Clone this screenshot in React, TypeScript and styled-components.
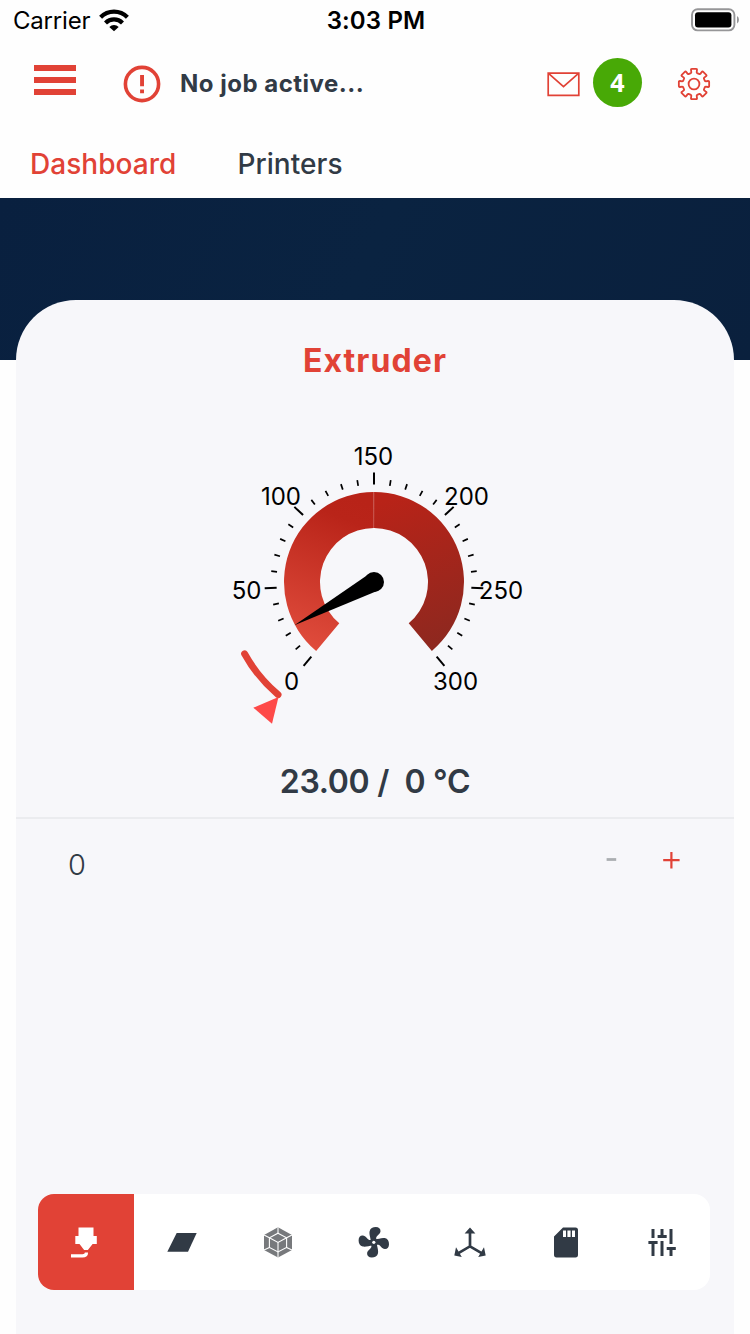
import React from 'react';
import styled, { createGlobalStyle } from 'styled-components';

const red = '#e14236';
const ink = '#313a45';

const GlobalStyle = createGlobalStyle`
  * { box-sizing: border-box; }
  body {
    margin: 0;
    background: #fefefe;
    font-family: Inter, 'Liberation Sans', sans-serif;
    color: ${ink};
  }
  svg { display: block; flex: none; }
`;

const Screen = styled.div`
  width: 750px;
  height: 1334px;
  display: flex;
  flex-direction: column;
  overflow: hidden;
`;

const StatusBar = styled.div`
  height: 40px;
  display: grid;
  grid-template-columns: 1fr auto 1fr;
  align-items: center;
  padding: 0 11px 0 13px;
  color: #000;
  font-size: 24px;
`;

const Carrier = styled.div`
  display: flex;
  align-items: center;
  gap: 9px;
  letter-spacing: -0.2px;
`;

const Clock = styled.div`
  font-weight: 600;
  letter-spacing: 0.15px;
`;

const BatterySlot = styled.div`
  justify-self: end;
`;

const Toolbar = styled.header`
  height: 88px;
  display: flex;
  align-items: center;
  padding: 0 39px 0 34px;
`;

const MenuButton = styled.div`
  width: 42px;
  height: 30px;
  margin: -8px 47px 0 0;
  display: flex;
  flex-direction: column;
  justify-content: space-between;
`;

const MenuLine = styled.div`
  height: 6px;
  background: ${red};
`;

const JobStatus = styled.div`
  flex: 1;
  margin: -1px 0 0 19px;
  font-size: 24px;
  font-weight: 700;
  letter-spacing: 0.5px;
  white-space: nowrap;
`;

const Badge = styled.div`
  width: 49px;
  height: 49px;
  margin: -4px 35px 0 13px;
  border-radius: 50%;
  background: #48a906;
  color: #fff;
  display: flex;
  align-items: center;
  justify-content: center;
  font: 700 25px 'Open Sans', 'Noto Sans', sans-serif;
`;

const Tabs = styled.nav`
  height: 70px;
  display: flex;
  align-items: center;
  gap: 61px;
  padding: 1px 0 0 30px;
`;

const Tab = styled.div<{ $active?: boolean }>`
  font-size: 28px;
  line-height: 34px;
  font-weight: 500;
  letter-spacing: 0.05px;
  color: ${(p) => (p.$active ? red : ink)};
`;

const Banner = styled.div`
  height: 162px;
  flex: none;
  background: linear-gradient(115deg, #09203f 0%, #0a2341 48%, #0a203d 100%);
`;

const Card = styled.main`
  flex: 1;
  margin: -60px 16px 0;
  border-radius: 60px 60px 0 0;
  background: #f7f7fa;
  display: flex;
  flex-direction: column;
`;

const Title = styled.h1`
  margin: 41px 0 0;
  height: 40px;
  font-size: 32px;
  line-height: 40px;
  font-weight: 700;
  text-align: center;
  letter-spacing: 1.1px;
  color: ${red};
`;

const GaugeSlot = styled.div`
  height: 340px;
  padding-top: 39px;
  display: flex;
  justify-content: center;
`;

const Reading = styled.div`
  height: 98px;
  padding-top: 41px;
  border-bottom: 2px solid #ebecef;
  text-align: center;
  white-space: pre;
  font-size: 32px;
  line-height: 40px;
  font-weight: 600;
  letter-spacing: -0.3px;
`;

const TargetRow = styled.div`
  height: 86px;
  display: flex;
  align-items: center;
  padding: 4px 54px 0 52px;
`;

const TargetValue = styled.div`
  flex: 1;
  font-size: 29px;
  font-weight: 300;
`;

const StepButtons = styled.div`
  display: flex;
  gap: 42px;
  margin-top: -9px;
`;

const ToolTabs = styled.footer`
  margin: auto 24px 44px 22px;
  height: 96px;
  display: flex;
  border-radius: 16px;
  overflow: hidden;
  background: #fff;
`;

const ToolTab = styled.div<{ $active?: boolean }>`
  flex: 1;
  display: flex;
  align-items: center;
  justify-content: center;
  background: ${(p) => (p.$active ? red : 'transparent')};
  color: ${(p) => (p.$active ? '#fff' : ink)};
`;

const WifiIcon = () => (
  <svg width="30" height="23" viewBox="0 0 30 23" fill="none" stroke="#000" strokeWidth="4.2">
    <path d="M1.6 8.2 A19 19 0 0 1 28.4 8.2" />
    <path d="M6.5 13.9 A12 12 0 0 1 23.5 13.9" />
    <path d="M15 22.3 L10.3 17.9 A7 7 0 0 1 19.7 17.9 Z" fill="#000" stroke="none" />
  </svg>
);

const BatteryIcon = () => (
  <svg width="48" height="24" viewBox="0 0 48 24">
    <rect x="1" y="1.2" width="42.4" height="21.2" rx="5.6" fill="none" stroke="#969698" strokeWidth="1.9" />
    <rect x="4" y="4.2" width="36.4" height="15.2" rx="3" fill="#000" />
    <path d="M46 8 Q48 9.3 48 11.8 T46 15.6 Z" fill="#969698" />
  </svg>
);

const AlertIcon = () => (
  <svg width="38" height="38" viewBox="0 0 38 38">
    <circle cx="19" cy="19" r="16.6" fill="none" stroke={red} strokeWidth="3.6" />
    <path d="M17.1 10h3.9v11.3h-3.9z M17.1 24.6h3.9v3.7h-3.9z" fill={red} />
  </svg>
);

const MailIcon = () => (
  <svg width="33" height="25" viewBox="0 0 33 25" fill="none" stroke={red} strokeWidth="1.7">
    <path d="M1.2 1.2h30.6v22.2H1.2z M1.2 1.2 L16.5 14.6 L31.8 1.2" />
  </svg>
);

const gearPath = (() => {
  const at = (r: number, deg: number) => {
    const a = (deg * Math.PI) / 180;
    return `${(17 + r * Math.sin(a)).toFixed(2)} ${(17 - r * Math.cos(a)).toFixed(2)}`;
  };
  let d = '';
  for (let i = 0; i < 8; i++) {
    const c = i * 45;
    d += `${i ? 'L' : 'M'}${at(11.3, c - 16)} L${at(11.9, c - 13)} L${at(14.4, c - 12)} Q${at(15.5, c - 12)} ${at(15.3, c - 8)}`;
    d += ` L${at(15.3, c + 8)} Q${at(15.5, c + 12)} ${at(14.4, c + 12)} L${at(11.9, c + 13)} L${at(11.3, c + 16)}`;
  }
  return d + 'Z';
})();

const GearIcon = () => (
  <svg width="34" height="34" viewBox="0 0 34 34" fill="none" stroke={red} strokeWidth="1.8" strokeLinejoin="round">
    <path d={gearPath} />
    <circle cx="17" cy="17" r="5.4" />
  </svg>
);

const MinusIcon = () => (
  <svg width="18" height="18" viewBox="0 0 18 18">
    <path d="M4.6 8.5h9.6" stroke="#abaeb1" strokeWidth="2.8" />
  </svg>
);

const PlusIcon = () => (
  <svg width="18" height="18" viewBox="0 0 18 18">
    <path d="M1.2 9.2h16.4M9.4 1v16.4" stroke={red} strokeWidth="2.2" />
  </svg>
);

const CX = 176;
const CY = 162;
const SWEEP = 280;
const polar = (r: number, deg: number): [number, number] => {
  const a = (deg * Math.PI) / 180;
  return [CX + r * Math.sin(a), CY - r * Math.cos(a)];
};
const pt = (r: number, deg: number) => polar(r, deg).map((v) => v.toFixed(2)).join(' ');

const labels = [
  { text: '0', x: 93.5, y: 270 },
  { text: '50', x: 48.5, y: 179 },
  { text: '100', x: 83, y: 85 },
  { text: '150', x: 175.5, y: 45 },
  { text: '200', x: 268.5, y: 85 },
  { text: '250', x: 303, y: 179 },
  { text: '300', x: 257.5, y: 270 },
];

const Gauge = ({ value, max }: { value: number; max: number }) => {
  const ticks = Array.from({ length: 31 }, (_, i) => i);
  const needle = (value / max) * SWEEP - SWEEP / 2;
  return (
    <svg width="354" height="300" viewBox="0 0 354 300" overflow="visible">
      <defs>
        <linearGradient id="low" gradientUnits="userSpaceOnUse" x1="118" y1="231" x2="176" y2="85">
          <stop offset="0" stopColor="#e04c3c" />
          <stop offset="0.85" stopColor="#b92419" />
          <stop offset="1" stopColor="#b82318" />
        </linearGradient>
        <linearGradient id="high" gradientUnits="userSpaceOnUse" x1="176" y1="85" x2="234" y2="231">
          <stop offset="0" stopColor="#b82318" />
          <stop offset="1" stopColor="#8d281f" />
        </linearGradient>
      </defs>
      <path d={`M${pt(90, -140)} A90 90 0 0 1 ${pt(90, -0.15)} L${pt(54, -0.2)} A54 54 0 0 0 ${pt(54, -140)}Z`} fill="url(#low)" />
      <path d={`M${pt(90, 0.05)} A90 90 0 0 1 ${pt(90, 140)} L${pt(54, 140)} A54 54 0 0 0 ${pt(54, 0.05)}Z`} fill="url(#high)" />
      {ticks.map((i) => {
        const major = i % 5 === 0;
        const deg = (i / 30) * SWEEP - SWEEP / 2;
        return (
          <path
            key={i}
            d={`M${pt(97.5, deg)} L${pt(major ? 109.5 : 103.3, deg)}`}
            stroke="#000"
            strokeWidth={major ? 2 : 1.7}
          />
        );
      })}
      {labels.map((l) => (
        <text key={l.text} x={l.x} y={l.y} textAnchor="middle" fontSize="24" fill="#000">
          {l.text}
        </text>
      ))}
      <path d={`M${pt(90.6, needle)} L${pt(9.5, needle + 84)} L${pt(9.5, needle - 84)}Z`} fill="#000" />
      <circle cx={CX} cy={CY} r="10" fill="#000" />
      <path d={`M${pt(148, -119)} A148 148 0 0 0 ${pt(148, -139.6)}`} fill="none" stroke={red} strokeWidth="6.8" strokeLinecap="round" />
      <path d="M80.5 277 L55.3 287.7 L74 303.7Z" fill="#fe4a49" />
    </svg>
  );
};

const ToolSvg = styled.svg.attrs({ width: 48, height: 48, viewBox: '0 0 48 48' })``;

const NozzleIcon = () => (
  <ToolSvg fill="currentColor">
    <path d="M16.5 9.5H31.5V18H34.8V26H30.6L25.9 32H22.1L17.5 26H13.3V18H16.5Z" />
    <path d="M9 38H20.5Q24.5 38 24.5 34.6" fill="none" stroke="currentColor" strokeWidth="3.2" transform="translate(0 -0.2)" />
    <path d="M21 32.6H27" stroke={red} strokeWidth="0.8" />
  </ToolSvg>
);

const BedIcon = () => (
  <ToolSvg fill="currentColor">
    <path d="M18.7 15H38.7L30 33.7H9.3Z" />
  </ToolSvg>
);

const ObjectIcon = () => (
  <ToolSvg fill="none" stroke="#fff" strokeWidth="1.1">
    <path d="M24 9.3L38 17V32L24 39.5L10 32V17Z" fill="#77797c" stroke="none" />
    <path d="M24 15.2L32.6 19.8V29.4L24 34L15.4 29.4V19.8Z" />
    <path d="M15.4 19.8L24 24.4L32.6 19.8M24 24.4V34" />
    <path d="M24 9.3V15.2M24 34V39.5M10 17L15.4 19.8M38 17L32.6 19.8M10 32L15.4 29.4M38 32L32.6 29.4" />
  </ToolSvg>
);

const FanIcon = () => (
  <ToolSvg fill="currentColor">
    {[0, 90, 180, 270].map((a) => (
      <path
        key={a}
        transform={`translate(23.8 24.3) rotate(${a})`}
        d="M-3.4 .5C-2.2 -3 -5 -7 -4.2 -11C-3.6 -14 -1 -15.2 2 -15.2C5 -15.2 6.9 -13.5 6.7 -11C6.5 -7.8 2.8 -6.8 2.4 -4.5C2.2 -3 3 -1.5 3.4 .5Z"
      />
    ))}
    <circle cx="23.8" cy="24.3" r="3.5" />
    <circle cx="23.8" cy="24.3" r="1.6" fill="#fff" />
  </ToolSvg>
);

const AxesIcon = () => (
  <ToolSvg fill="currentColor">
    <path d="M24 13V28.3L12 35.3M24 28.3L36 35.3" fill="none" stroke="currentColor" strokeWidth="2.7" />
    <path d="M24 9.6L29.4 15.4H18.6Z M8.3 37.4L10 29.3L15.8 39Z M39.7 37.4L38 29.3L32.2 39Z" />
  </ToolSvg>
);

const SdIcon = () => (
  <ToolSvg fill="currentColor">
    <path
      fillRule="evenodd"
      d="M21 9.4H33.5Q36 9.4 36 12V36.8Q36 39.4 33.5 39.4H14.5Q12 39.4 12 36.8V18.6ZM21 12.4V19H24V12.4ZM25.4 12.4V19H28.6V12.4ZM30 12.4V19H33V12.4Z"
    />
  </ToolSvg>
);

const TuneIcon = () => (
  <ToolSvg fill="none" stroke="currentColor" strokeWidth="3">
    <path d="M15 11V20M10.4 24.5H19.6M15 24.5V38M24 11V18.5M19.6 18.5H28.7M24 23V38M33 11V26M28.7 30.5H37.8M33 30.5V38" />
  </ToolSvg>
);

const tools = [NozzleIcon, BedIcon, ObjectIcon, FanIcon, AxesIcon, SdIcon, TuneIcon];

export default function App() {
  return (
    <Screen>
      <GlobalStyle />
      <StatusBar>
        <Carrier>
          Carrier
          <WifiIcon />
        </Carrier>
        <Clock>3:03 PM</Clock>
        <BatterySlot>
          <BatteryIcon />
        </BatterySlot>
      </StatusBar>
      <Toolbar>
        <MenuButton>
          <MenuLine />
          <MenuLine />
          <MenuLine />
        </MenuButton>
        <AlertIcon />
        <JobStatus>No job active...</JobStatus>
        <MailIcon />
        <Badge>4</Badge>
        <GearIcon />
      </Toolbar>
      <Tabs>
        <Tab $active>Dashboard</Tab>
        <Tab>Printers</Tab>
      </Tabs>
      <Banner />
      <Card>
        <Title>Extruder</Title>
        <GaugeSlot>
          <Gauge value={23} max={300} />
        </GaugeSlot>
        <Reading>{'23.00 /  0 °C'}</Reading>
        <TargetRow>
          <TargetValue>0</TargetValue>
          <StepButtons>
            <MinusIcon />
            <PlusIcon />
          </StepButtons>
        </TargetRow>
        <ToolTabs>
          {tools.map((Icon, i) => (
            <ToolTab key={i} $active={i === 0}>
              <Icon />
            </ToolTab>
          ))}
        </ToolTabs>
      </Card>
    </Screen>
  );
}
